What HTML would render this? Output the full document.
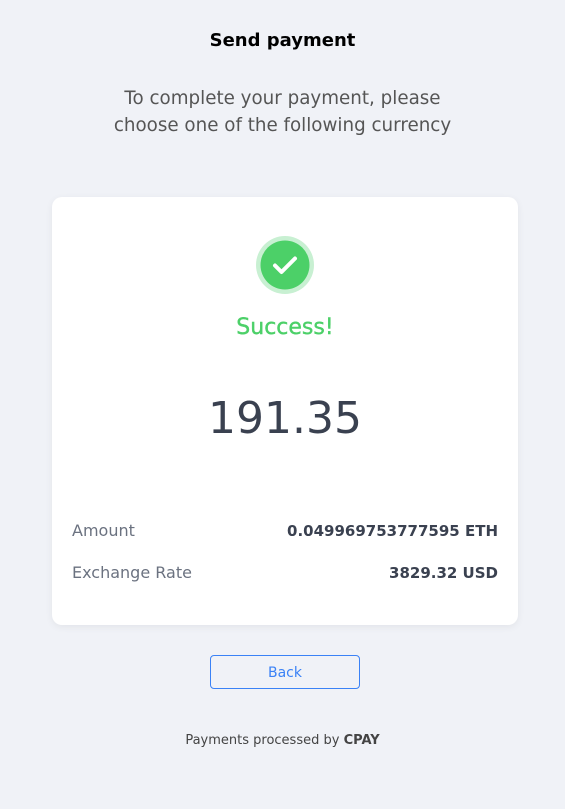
<!DOCTYPE html>
<html><head><style>
body{margin:0;width:565px;height:809px;background:#f0f2f7;font-family:"DejaVu Sans",sans-serif;position:relative;overflow:hidden}
.a{position:absolute;left:0;width:565px;text-align:center}
.card{position:absolute;left:52px;top:197px;width:466px;height:428px;background:#fff;border-radius:10px;box-shadow:0 2px 8px rgba(0,0,0,.06)}
.row{position:absolute;left:20px;right:20px;font-size:16px;color:#6b7280;line-height:22px}
.row b{float:right;color:#3a4150;font-weight:bold;font-size:15px}
</style></head><body>
<div class="a" style="top:30px;font-size:18px;font-weight:bold;color:#000">Send payment</div>
<div class="a" style="top:85px;font-size:18.3px;line-height:27px;color:#555">To complete your payment, please<br>choose one of the following currency</div>
<div class="card">
<svg style="position:absolute;left:203px;top:39px" width="60" height="60"><circle cx="30" cy="29" r="29" fill="#c8f0d2"/><circle cx="30" cy="29" r="24.5" fill="#4cd068"/><path d="M20 29.5l6.5 6.5L40 22.5" stroke="#fff" stroke-width="4" fill="none" stroke-linecap="round" stroke-linejoin="round"/></svg>
<div style="position:absolute;left:0;right:0;top:118px;text-align:center;font-size:22px;color:#4cd068;-webkit-text-stroke:0.4px #4cd068">Success!</div>
<div style="position:absolute;left:0;right:0;top:196px;text-align:center;font-size:44px;color:#3a4150">191.35</div>
<div class="row" style="top:323px">Amount<b>0.049969753777595 ETH</b></div>
<div class="row" style="top:365px">Exchange Rate<b>3829.32 USD</b></div>
</div>
<div style="position:absolute;left:210px;top:655px;width:148px;height:32px;border:1px solid #3b82f6;border-radius:4px;text-align:center;line-height:34px;font-size:14px;color:#3b82f6">Back</div>
<div class="a" style="top:733px;font-size:13px;color:#444">Payments processed by <b>CPAY</b></div>
</body></html>
